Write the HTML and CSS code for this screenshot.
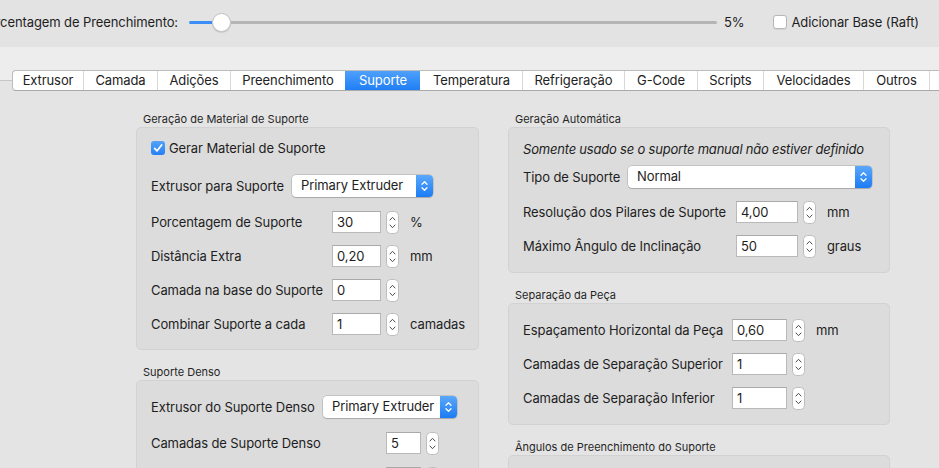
FILE: index.html
```html
<!DOCTYPE html>
<html lang="pt">
<head>
<meta charset="utf-8">
<title>Suporte</title>
<link rel="stylesheet" href="styles.css">
</head>
<body>
<div class="window">
  <header class="topbar">
    <div class="fill-label-wrap"><span class="fill-label">Porcentagem de Preenchimento:</span></div>
    <div class="slider">
      <div class="slider-fill"></div>
      <div class="slider-knob"></div>
      <div class="slider-rest"></div>
    </div>
    <span class="fill-value">5%</span>
    <label class="raft"><span class="cb"></span>Adicionar Base (Raft)</label>
  </header>

  <div class="tabhead">
    <nav class="tabs">
      <span class="tab t-extrusor">Extrusor</span>
      <span class="tab t-camada">Camada</span>
      <span class="tab t-adicoes">Adições</span>
      <span class="tab t-preench">Preenchimento</span>
      <span class="tab t-suporte tab-on">Suporte</span>
      <span class="tab t-temp">Temperatura</span>
      <span class="tab t-refrig">Refrigeração</span>
      <span class="tab t-gcode">G-Code</span>
      <span class="tab t-scripts">Scripts</span>
      <span class="tab t-veloc">Velocidades</span>
      <span class="tab t-outros">Outros</span>
      <span class="tab tab-cut"></span>
    </nav>
  </div>

  <main class="panel">
    <div class="col col-left">
      <section class="group">
        <h3 class="group-title">Geração de Material de Suporte</h3>
        <div class="group-box box-gen">
          <div class="row row-check">
            <svg class="cb-on" width="14" height="14" viewBox="0 0 14 14"><defs><linearGradient id="cbg" x1="0" y1="0" x2="0" y2="1"><stop offset="0" stop-color="#55a3fa"/><stop offset="1" stop-color="#2580f4"/></linearGradient></defs><rect x="0" y="0" width="14" height="14" rx="3" fill="url(#cbg)"/><path d="M3.6 7.4 L6 9.9 L10.6 3.9" fill="none" stroke="#fff" stroke-width="1.7" stroke-linecap="round" stroke-linejoin="round"/></svg>
            <span class="check-text">Gerar Material de Suporte</span>
          </div>
          <div class="row row-popup">
            <span class="label">Extrusor para Suporte</span>
            <div class="popup">
              <span class="popup-text">Primary Extruder</span>
              <span class="popup-arrows"><svg width="9" height="14" viewBox="0 0 9 14"><path d="M2 5.2 L4.5 2.7 L7 5.2 M2 8.8 L4.5 11.3 L7 8.8" fill="none" stroke="#fff" stroke-width="1.3" stroke-linecap="round" stroke-linejoin="round"/></svg></span>
            </div>
          </div>
          <div class="row">
            <span class="label">Porcentagem de Suporte</span>
            <span class="num">30</span>
            <svg class="stepper" width="13" height="23" viewBox="0 0 13 23"><rect x="0.5" y="0.5" width="12" height="22" rx="4" fill="#fff" stroke="#bdbdbd"/><path d="M4 9 L6.5 6.3 L9 9 M4 14 L6.5 16.7 L9 14" fill="none" stroke="#4d4d4d" stroke-width="1" stroke-linecap="round" stroke-linejoin="round"/></svg>
            <span class="unit">%</span>
          </div>
          <div class="row">
            <span class="label">Distância Extra</span>
            <span class="num">0,20</span>
            <svg class="stepper" width="13" height="23" viewBox="0 0 13 23"><rect x="0.5" y="0.5" width="12" height="22" rx="4" fill="#fff" stroke="#bdbdbd"/><path d="M4 9 L6.5 6.3 L9 9 M4 14 L6.5 16.7 L9 14" fill="none" stroke="#4d4d4d" stroke-width="1" stroke-linecap="round" stroke-linejoin="round"/></svg>
            <span class="unit">mm</span>
          </div>
          <div class="row">
            <span class="label">Camada na base do Suporte</span>
            <span class="num">0</span>
            <svg class="stepper" width="13" height="23" viewBox="0 0 13 23"><rect x="0.5" y="0.5" width="12" height="22" rx="4" fill="#fff" stroke="#bdbdbd"/><path d="M4 9 L6.5 6.3 L9 9 M4 14 L6.5 16.7 L9 14" fill="none" stroke="#4d4d4d" stroke-width="1" stroke-linecap="round" stroke-linejoin="round"/></svg>
          </div>
          <div class="row">
            <span class="label">Combinar Suporte a cada</span>
            <span class="num">1</span>
            <svg class="stepper" width="13" height="23" viewBox="0 0 13 23"><rect x="0.5" y="0.5" width="12" height="22" rx="4" fill="#fff" stroke="#bdbdbd"/><path d="M4 9 L6.5 6.3 L9 9 M4 14 L6.5 16.7 L9 14" fill="none" stroke="#4d4d4d" stroke-width="1" stroke-linecap="round" stroke-linejoin="round"/></svg>
            <span class="unit">camadas</span>
          </div>
        </div>
      </section>

      <section class="group">
        <h3 class="group-title">Suporte Denso</h3>
        <div class="group-box box-dense">
          <div class="row row-popup">
            <span class="label">Extrusor do Suporte Denso</span>
            <div class="popup">
              <span class="popup-text">Primary Extruder</span>
              <span class="popup-arrows"><svg width="9" height="14" viewBox="0 0 9 14"><path d="M2 5.2 L4.5 2.7 L7 5.2 M2 8.8 L4.5 11.3 L7 8.8" fill="none" stroke="#fff" stroke-width="1.3" stroke-linecap="round" stroke-linejoin="round"/></svg></span>
            </div>
          </div>
          <div class="row row-tall">
            <span class="label">Camadas de Suporte Denso</span>
            <span class="num">5</span>
            <svg class="stepper" width="13" height="23" viewBox="0 0 13 23"><rect x="0.5" y="0.5" width="12" height="22" rx="4" fill="#fff" stroke="#bdbdbd"/><path d="M4 9 L6.5 6.3 L9 9 M4 14 L6.5 16.7 L9 14" fill="none" stroke="#4d4d4d" stroke-width="1" stroke-linecap="round" stroke-linejoin="round"/></svg>
          </div>
          <div class="row">
            <span class="label"></span>
            <span class="num"></span>
            <svg class="stepper" width="13" height="23" viewBox="0 0 13 23"><rect x="0.5" y="0.5" width="12" height="22" rx="4" fill="#fff" stroke="#bdbdbd"/><path d="M4 9 L6.5 6.3 L9 9 M4 14 L6.5 16.7 L9 14" fill="none" stroke="#4d4d4d" stroke-width="1" stroke-linecap="round" stroke-linejoin="round"/></svg>
          </div>
        </div>
      </section>
    </div>

    <div class="col col-right">
      <section class="group">
        <h3 class="group-title">Geração Automática</h3>
        <div class="group-box box-auto">
          <div class="row row-note"><em class="note">Somente usado se o suporte manual não estiver definido</em></div>
          <div class="row row-popup">
            <span class="label">Tipo de Suporte</span>
            <div class="popup">
              <span class="popup-text">Normal</span>
              <span class="popup-arrows"><svg width="9" height="14" viewBox="0 0 9 14"><path d="M2 5.2 L4.5 2.7 L7 5.2 M2 8.8 L4.5 11.3 L7 8.8" fill="none" stroke="#fff" stroke-width="1.3" stroke-linecap="round" stroke-linejoin="round"/></svg></span>
            </div>
          </div>
          <div class="row">
            <span class="label">Resolução dos Pilares de Suporte</span>
            <span class="num">4,00</span>
            <svg class="stepper" width="13" height="23" viewBox="0 0 13 23"><rect x="0.5" y="0.5" width="12" height="22" rx="4" fill="#fff" stroke="#bdbdbd"/><path d="M4 9 L6.5 6.3 L9 9 M4 14 L6.5 16.7 L9 14" fill="none" stroke="#4d4d4d" stroke-width="1" stroke-linecap="round" stroke-linejoin="round"/></svg>
            <span class="unit">mm</span>
          </div>
          <div class="row">
            <span class="label">Máximo Ângulo de Inclinação</span>
            <span class="num">50</span>
            <svg class="stepper" width="13" height="23" viewBox="0 0 13 23"><rect x="0.5" y="0.5" width="12" height="22" rx="4" fill="#fff" stroke="#bdbdbd"/><path d="M4 9 L6.5 6.3 L9 9 M4 14 L6.5 16.7 L9 14" fill="none" stroke="#4d4d4d" stroke-width="1" stroke-linecap="round" stroke-linejoin="round"/></svg>
            <span class="unit">graus</span>
          </div>
        </div>
      </section>

      <section class="group">
        <h3 class="group-title">Separação da Peça</h3>
        <div class="group-box box-sep">
          <div class="row">
            <span class="label">Espaçamento Horizontal da Peça</span>
            <span class="num">0,60</span>
            <svg class="stepper" width="13" height="23" viewBox="0 0 13 23"><rect x="0.5" y="0.5" width="12" height="22" rx="4" fill="#fff" stroke="#bdbdbd"/><path d="M4 9 L6.5 6.3 L9 9 M4 14 L6.5 16.7 L9 14" fill="none" stroke="#4d4d4d" stroke-width="1" stroke-linecap="round" stroke-linejoin="round"/></svg>
            <span class="unit">mm</span>
          </div>
          <div class="row">
            <span class="label">Camadas de Separação Superior</span>
            <span class="num">1</span>
            <svg class="stepper" width="13" height="23" viewBox="0 0 13 23"><rect x="0.5" y="0.5" width="12" height="22" rx="4" fill="#fff" stroke="#bdbdbd"/><path d="M4 9 L6.5 6.3 L9 9 M4 14 L6.5 16.7 L9 14" fill="none" stroke="#4d4d4d" stroke-width="1" stroke-linecap="round" stroke-linejoin="round"/></svg>
          </div>
          <div class="row">
            <span class="label">Camadas de Separação Inferior</span>
            <span class="num">1</span>
            <svg class="stepper" width="13" height="23" viewBox="0 0 13 23"><rect x="0.5" y="0.5" width="12" height="22" rx="4" fill="#fff" stroke="#bdbdbd"/><path d="M4 9 L6.5 6.3 L9 9 M4 14 L6.5 16.7 L9 14" fill="none" stroke="#4d4d4d" stroke-width="1" stroke-linecap="round" stroke-linejoin="round"/></svg>
          </div>
        </div>
      </section>

      <section class="group">
        <h3 class="group-title">Ângulos de Preenchimento do Suporte</h3>
        <div class="group-box box-angles"></div>
      </section>
    </div>
  </main>
</div>
</body>
</html>
```

FILE: styles.css
```css
* {
  box-sizing: border-box;
  margin: 0;
  padding: 0;
}

html,
body {
  width: 939px;
  height: 468px;
  overflow: hidden;
}

body {
  font-family: "Inter", "Roboto", "Liberation Sans", sans-serif;
  font-size: 13px;
  letter-spacing: -0.1px;
  color: #1e1e1e;
  background: #e4e4e4;
}

.window {
  display: flex;
  flex-direction: column;
  height: 468px;
}

/* ---------- top bar ---------- */
.topbar {
  height: 47px;
  flex: none;
  display: flex;
  align-items: center;
  padding-bottom: 3px;
  background: #e3e3e3;
}

.fill-label-wrap {
  width: 178px;
  flex: none;
  display: flex;
  justify-content: flex-end;
  overflow: hidden;
  white-space: nowrap;
}

.slider {
  width: 528px;
  height: 20px;
  margin-left: 11px;
  flex: none;
  display: flex;
  align-items: center;
}

.slider-fill {
  width: 23px;
  height: 3px;
  background: #3b8ef6;
  border-radius: 2px 0 0 2px;
}

.slider-knob {
  width: 19px;
  height: 19px;
  flex: none;
  border-radius: 50%;
  background: #fff;
  border: 1px solid #c2c2c2;
  box-shadow: 0 1px 1px rgba(0, 0, 0, 0.12);
}

.slider-rest {
  flex: 1;
  height: 3px;
  background: #b5b5b5;
  border-radius: 0 2px 2px 0;
}

.fill-value {
  margin-left: 7px;
}

.raft {
  display: flex;
  align-items: center;
  margin-left: 29px;
  white-space: nowrap;
}

.cb {
  width: 14px;
  height: 14px;
  margin-right: 4px;
  border-radius: 3px;
  background: #fff;
  border: 1px solid #b8b8b8;
  box-shadow: 0 0.5px 1px rgba(0, 0, 0, 0.08);
}

/* ---------- tabs ---------- */
.tabhead {
  height: 34px;
  flex: none;
  display: flex;
  align-items: flex-end;
  padding-left: 12px;
  background: #ededed;
  border-bottom: 1px solid #c6c6c6;
}

.tabs {
  flex: none;
  display: flex;
  height: 21px;
  margin-bottom: -11px;
  position: relative;
  z-index: 1;
  background: #fff;
  border: 1px solid #bcbcbc;
  border-bottom-color: #a9a9a9;
  border-right: none;
  border-radius: 4px 0 0 4px;
}

.tab {
  flex: none;
  line-height: 19px;
  text-align: center;
  white-space: nowrap;
  border-left: 1px solid #d8d8d8;
  color: #222;
}

.tab:first-child {
  border-left: none;
}

.t-extrusor { width: 70px; }
.t-camada { width: 74px; }
.t-adicoes { width: 73px; }
.t-preench { width: 115px; }
.t-suporte { width: 75px; }
.t-temp { width: 102px; }
.t-refrig { width: 102px; }
.t-gcode { width: 73px; }
.t-scripts { width: 66px; }
.t-veloc { width: 100px; }
.t-outros { width: 66px; }

.tab-on {
  color: #fff;
  border-left-color: transparent;
  background: linear-gradient(#4fa0fa, #1f7ff5);
}

.tab-on + .tab {
  border-left-color: transparent;
}

.tab-cut {
  width: 40px;
}

/* ---------- panel ---------- */
.panel {
  flex: 1;
  display: flex;
  gap: 29px;
  padding: 32px 0 0 136px;
  overflow: hidden;
}

.col {
  flex: none;
  display: flex;
  flex-direction: column;
  gap: 16px;
}

.col-left {
  width: 343px;
}

.col-right {
  width: 382px;
}

.group-title {
  font-size: 11px;
  line-height: 13px;
  font-weight: normal;
  letter-spacing: 0;
  color: #262626;
  padding-left: 7px;
  margin-bottom: 1px;
}

.group-box {
  background: #dcdcdc;
  border: 1px solid #d2d2d2;
  border-radius: 5px;
  padding: 0 14px;
}

.row {
  display: flex;
  align-items: center;
  height: 34px;
  white-space: nowrap;
}

.label {
  flex: none;
}

.num {
  flex: none;
  height: 22px;
  line-height: 20px;
  padding-left: 4px;
  background: #fff;
  border: 1px solid #b9b9b9;
  border-top-color: #a9a9a9;
}

.stepper {
  flex: none;
  margin-left: 5px;
}

.unit {
  margin-left: 11px;
}

.popup {
  display: flex;
  height: 22px;
  flex: none;
  background: #fff;
  border-radius: 4px;
  overflow: hidden;
  box-shadow: 0 0 0 0.5px rgba(0, 0, 0, 0.22), 0 1px 1px rgba(0, 0, 0, 0.14);
}

.popup-text {
  flex: 1;
  padding-left: 9px;
  line-height: 21px;
}

.popup-arrows {
  width: 17px;
  display: flex;
  align-items: center;
  justify-content: center;
  background: linear-gradient(#5aa8fb, #1b7cf4);
}

.cb-on {
  flex: none;
}

.check-text {
  margin-left: 4px;
}

.note {
  font-style: italic;
  letter-spacing: -0.2px;
}

/* left: support material generation */
.box-gen {
  padding-top: 1px;
  padding-bottom: 8px;
}

.box-gen .row-check,
.box-gen .row-popup {
  height: 38px;
}

.box-gen .label {
  width: 181px;
}

.box-gen .row-popup .label {
  width: 141px;
}

.box-gen .num {
  width: 49px;
}

.box-gen .popup {
  width: 141px;
}

/* left: dense support */
.box-dense {
  padding-top: 8px;
  padding-bottom: 8px;
}

.box-dense .row-popup,
.box-dense .row-tall {
  height: 36px;
}

.box-dense .label {
  width: 235px;
}

.box-dense .row-popup .label {
  width: 172px;
}

.box-dense .num {
  width: 35px;
}

.box-dense .popup {
  width: 134px;
}

/* right: automatic generation */
.box-auto {
  padding-top: 11px;
  padding-bottom: 9px;
}

.box-auto .row-note {
  height: 20px;
}

.box-auto .row-popup {
  height: 36px;
}

.box-auto .label {
  width: 213px;
}

.box-auto .row-popup .label {
  width: 105px;
}

.box-auto .num {
  width: 62px;
}

.box-auto .popup {
  width: 244px;
}

/* right: part separation */
.box-sep {
  padding-top: 9px;
  padding-bottom: 9px;
}

.box-sep .label {
  width: 209px;
}

.box-sep .num {
  width: 55px;
}

.box-angles {
  height: 60px;
}
```
